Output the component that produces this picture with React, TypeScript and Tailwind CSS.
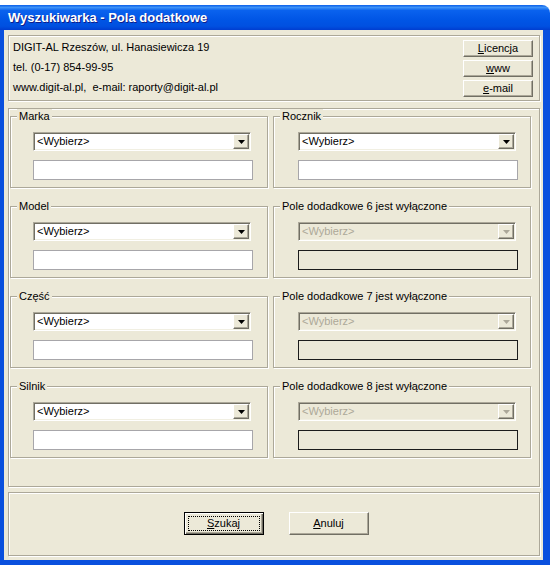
import React from 'react'

const etched = 'border border-[#ACA899] shadow-[inset_1px_1px_0_#fff,1px_1px_0_#fff]'
const raised =
  'border border-t-white border-l-white border-r-[#716F64] border-b-[#716F64] shadow-[inset_-1px_-1px_0_#ACA899] bg-[#ECE9D8]'

function Combo({ disabled }: { disabled?: boolean }) {
  return (
    <div
      className={`flex h-[19px] w-[218px] border border-t-[#ACA899] border-l-[#ACA899] border-r-white border-b-white shadow-[inset_1px_1px_0_#716F64,inset_-1px_-1px_0_#F1EFE2] p-[1px] ${
        disabled ? 'bg-[#ECE9D8] text-[#ACA899]' : 'bg-white text-black'
      }`}
    >
      <span className="flex-1 pl-[2px] leading-[15px]">&lt;Wybierz&gt;</span>
      <span className={`flex w-[16px] items-center justify-center ${raised}`}>
        <svg width="7" height="4" viewBox="0 0 7 4">
          <path d="M0 0h7L3.5 4z" fill={disabled ? '#ACA899' : '#000'} />
        </svg>
      </span>
    </div>
  )
}

function Group({ label, disabled, right }: { label: string; disabled?: boolean; right?: boolean }) {
  return (
    <div className={`relative h-[72px] w-[258px] ${etched} ${right ? 'pl-[24px]' : 'pl-[22px]'} pt-[15px]`}>
      <span className="absolute -top-[8px] left-[6px] bg-[#ECE9D8] px-[2px] leading-[14px]">{label}</span>
      <Combo disabled={disabled} />
      <div
        className={`mt-[9px] h-[20px] w-[220px] border ${
          disabled ? 'border-[#1c1c1c] bg-[#ECE9D8]' : 'border-[#A7A6AA] bg-white'
        }`}
      />
    </div>
  )
}

export default function App() {
  return (
    <div className="h-[567px] w-[550px] overflow-hidden bg-white pt-[5px] text-[11px] text-black [font-family:'Liberation_Sans',Arial,sans-serif]">
      <div className="flex w-[550px] flex-col overflow-hidden rounded-tr-[8px]">
        {/* pasek tytułu */}
        <div className="flex h-[25px] items-center bg-[linear-gradient(to_bottom,#0A5FE9_0%,#3D91F7_10%,#0A62EE_22%,#0055E5_60%,#0050E0_85%,#003DD0_100%)] pl-[8px]">
          <span className="text-[13px] font-bold text-white [text-shadow:1px_1px_0_#0F1E8A]">Wyszukiwarka - Pola dodatkowe</span>
        </div>

        <div className="flex h-[535px] flex-col border-b-[5px] border-l-4 border-r-[7px] border-[#0A50DE] bg-[#ECE9D8] pt-[5px] pb-[4px] pl-[4px] pr-[3px]">
          {/* dane firmy */}
          <div className={`flex h-[66px] justify-between pl-[4px] pr-[6px] ${etched}`}>
            <div className="pt-[1px] leading-[20px]">
              <div>DIGIT-AL Rzeszów, ul. Hanasiewicza 19</div>
              <div>tel. (0-17) 854-99-95</div>
              <div>www.digit-al.pl,&nbsp; e-mail: raporty@digit-al.pl</div>
            </div>
            <div className="flex flex-col gap-[3px] pt-[4px]">
              <div className={`flex h-[17px] w-[70px] items-center justify-center ${raised}`}>
                <span><u>L</u>icencja</span>
              </div>
              <div className={`flex h-[17px] w-[70px] items-center justify-center ${raised}`}>
                <span><u>w</u>ww</span>
              </div>
              <div className={`flex h-[17px] w-[70px] items-center justify-center ${raised}`}>
                <span><u>e</u>-mail</span>
              </div>
            </div>
          </div>

          {/* pola */}
          <div className={`mt-[7px] grid h-[379px] grid-cols-[258px_258px] content-start gap-x-[5px] gap-y-[18px] pt-[7px] pl-[1px] ${etched}`}>
            <Group label="Marka" />
            <Group label="Rocznik" right />
            <Group label="Model" />
            <Group label="Pole dodadkowe 6 jest wyłączone" disabled right />
            <Group label="Część" />
            <Group label="Pole dodadkowe 7 jest wyłączone" disabled right />
            <Group label="Silnik" />
            <Group label="Pole dodadkowe 8 jest wyłączone" disabled right />
          </div>

          {/* przyciski */}
          <div className={`mt-[5px] flex h-[64px] items-center justify-center gap-[25px] pl-[4px] pb-[2px] ${etched}`}>
            <div className="h-[23px] w-[80px] border border-black bg-[#ECE9D8] shadow-[inset_1px_1px_0_#fff,inset_-1px_-1px_0_#716F64,inset_-2px_-2px_0_#ACA899] p-[3px]">
              <div className="flex h-full items-center justify-center border border-dotted border-black">
                <span><u>S</u>zukaj</span>
              </div>
            </div>
            <div className={`flex h-[23px] w-[80px] items-center justify-center ${raised}`}>
              <span><u>A</u>nuluj</span>
            </div>
          </div>
        </div>
      </div>
    </div>
  )
}
